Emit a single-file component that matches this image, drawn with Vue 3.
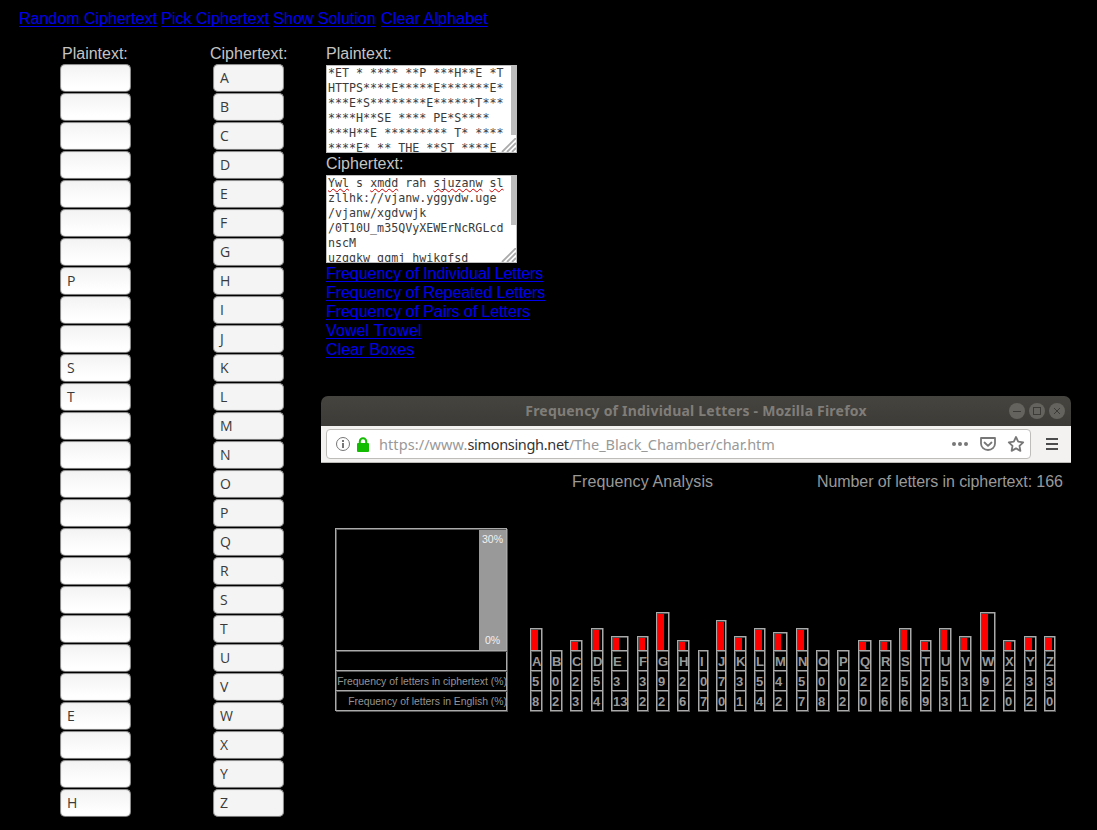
<script setup>
const plainLetters = { 7: 'P', 10: 'S', 11: 'T', 22: 'E', 25: 'H' }
const letters = 'ABCDEFGHIJKLMNOPQRSTUVWXYZ'.split('')
const x = [530, 550, 570, 591, 611, 637, 656, 677, 698, 716, 734, 754, 773, 796, 816, 837, 858, 879, 899, 920, 939, 959, 980, 1003, 1024, 1044]
const w = [13, 13, 13, 13, 18, 12, 14, 13, 11, 11, 13, 12, 15, 13, 14, 13, 14, 13, 13, 12, 13, 13, 16, 13, 13, 12]
const cipher = [5, 0, 2, 5, 3, 3, 9, 2, 0, 7, 3, 5, 4, 5, 0, 0, 2, 2, 5, 2, 5, 3, 9, 2, 3, 3]
const english = [8, 2, 3, 4, 13, 2, 2, 6, 7, 0, 1, 4, 2, 7, 8, 2, 0, 6, 6, 9, 3, 1, 2, 0, 2, 0]
const heights = { 0: 0, 2: 10, 3: 14, 4: 18, 5: 22, 7: 30, 9: 38 }
const columns = letters.map((l, i) => ({
  l, c: cipher[i], e: english[i], h: heights[cipher[i]],
  width: w[i], gap: i ? x[i] - x[i - 1] - w[i - 1] : 23
}))
const plainText = ['*ET * **** **P ***H**E *T', 'HTTPS****E*****E*******E*', '***E*S********E******T***', '****H**SE **** PE*S****', '***H**E ********* T* ****', '****E* ** THE **ST ****E'].join('\n')
const cipherRest = ['zllhk://vjanw.yggydw.uge', '/vjanw/xgdvwjk', '/0T10U_m35QVyXEWErNcRGLcd', 'nscM', 'uzggkw ggmj hwikgfsd'].join('\n')
const words = [['Ywl', 1], ['s', 0], ['xmdd', 1], ['rah', 0], ['sjuzanw', 1], ['sl', 1]]
</script>

<template>
  <div class="page">
    <nav class="top"><a>Random Ciphertext</a> <a>Pick Ciphertext</a> <a>Show Solution</a> <a class="wide">Clear Alphabet</a></nav>
    <div class="main">
      <section class="alpha first">
        <div class="label">Plaintext:</div>
        <div v-for="(l, i) in letters" :key="l" class="field">{{ plainLetters[i] }}</div>
      </section>
      <section class="alpha second">
        <div class="label">Ciphertext:</div>
        <div v-for="l in letters" :key="l" class="field disabled">{{ l }}</div>
      </section>
      <section class="right">
        <div class="boxes">
          <div class="label">Plaintext:</div>
          <div class="area"><pre>{{ plainText }}</pre><i class="scroll long"></i>
            <svg class="grip" width="15" height="14" viewBox="0 0 15 14"><path d="M1 14 15 0M6 14 15 5M11 14 15 10" /></svg>
          </div>
          <div class="label">Ciphertext:</div>
          <div class="area"><pre><template v-for="(q, i) in words" :key="i"><span :class="{ bad: q[1] }">{{ q[0] }}</span>{{ i < 5 ? ' ' : '\n' }}</template>{{ cipherRest }}</pre><i class="scroll short"></i>
            <svg class="grip" width="15" height="14" viewBox="0 0 15 14"><path d="M1 14 15 0M6 14 15 5M11 14 15 10" /></svg>
          </div>
          <div class="links">
            <div><a>Frequency of Individual Letters</a></div>
            <div><a>Frequency of Repeated Letters</a></div>
            <div><a>Frequency of Pairs of Letters</a></div>
            <div><a class="wide">Vowel Trowel</a></div>
            <div><a class="wide">Clear Boxes</a></div>
          </div>
        </div>
        <div class="window">
          <header class="title">
            <span class="name">Frequency of Individual Letters - Mozilla Firefox</span>
            <svg class="controls" width="58" height="18" viewBox="0 0 58 18">
              <g fill="#65635d"><circle cx="9" cy="9" r="8" /><circle cx="29" cy="9" r="8" /><circle cx="49" cy="9" r="8" /></g>
              <g fill="none" stroke="#3c3b37"><path d="M5 9.5h8M46 6l6 6M52 6l-6 6" /><rect x="25.5" y="5.5" width="7" height="7" /></g>
            </svg>
          </header>
          <div class="toolbar">
            <div class="urlbar">
              <svg width="16" height="16" viewBox="0 0 16 16"><circle cx="8" cy="8" r="6.5" fill="none" stroke="#777" /><path d="M7 4h2v2H7zM7 7h2v5H7z" fill="#777" /></svg>
              <svg class="lock" width="12" height="15" viewBox="0 0 12 15"><path d="M2.8 7V4.5a3.2 3.2 0 0 1 6.4 0V7" fill="none" stroke="#12bc00" stroke-width="2" /><rect y="6" width="12" height="9" rx="1" fill="#12bc00" /></svg>
              <span class="url"><span class="scheme">https://www.</span><b>simonsingh.net</b>/The_Black_Chamber/char.htm</span>
              <svg class="acts" width="74" height="18" viewBox="0 0 74 18">
                <g fill="#777"><circle cx="3" cy="9" r="2" /><circle cx="9" cy="9" r="2" /><circle cx="15" cy="9" r="2" /></g>
                <g fill="none" stroke="#777" stroke-width="1.8" stroke-linejoin="round"><path d="M30 3h14v5.500a7 6.500 0 0 1-14 0zM33.500 7.500l3.500 3.300L40.500 7.500" stroke-linecap="round" /><path d="m65 2 2.200 4.700 5 .6-3.700 3.500.9 5.100L65 13.400l-4.400 2.500.9-5.100-3.700-3.500 5-.6z" /></g>
              </svg>
            </div>
            <svg class="menu" width="12" height="14" viewBox="0 0 12 14"><path d="M0 2h12M0 7h12M0 12h12" stroke="#4c4c4c" stroke-width="2" /></svg>
          </div>
          <div class="heading"><span class="fa">Frequency Analysis</span><span class="count">Number of letters in ciphertext: 166</span></div>
          <div class="chart">
            <div class="legend">
              <div class="plot"><div class="scale"><span>30%</span><span>0%</span></div></div>
              <div class="cell"></div>
              <div class="cell">Frequency of letters in ciphertext (%)</div>
              <div class="cell">Frequency of letters in English (%)</div>
            </div>
            <div v-for="c in columns" :key="c.l" class="col" :style="{ width: c.width + 'px', marginLeft: c.gap + 'px' }">
              <div v-if="c.h" class="barcell" :style="{ height: c.h + 'px' }"><i></i></div>
              <div class="cell">{{ c.l }}</div>
              <div class="cell">{{ c.c }}</div>
              <div class="cell">{{ c.e }}</div>
            </div>
          </div>
        </div>
      </section>
    </div>
  </div>
</template>

<style>
body { margin: 0; background: #000; }
</style>
<style scoped>
* { box-sizing: border-box; }
.page { width: 1097px; height: 830px; overflow: hidden; background: #000; color: #c4c4c4; font: 16px/19px "Liberation Sans", Arial, sans-serif; }
.top { padding: 9px 0 0 19px; height: 44px; }
a { color: #0000ee; text-decoration: underline; text-decoration-thickness: 1px; text-underline-offset: 2px; text-decoration-skip-ink: none; }
a.wide { letter-spacing: 0.12px; }
.top a.wide { margin-left: 1px; }
.links a:not(.wide) { letter-spacing: -0.05px; }
.main { display: flex; }
.alpha { width: 72px; flex: none; }
.first { margin-left: 60px; }
.second { margin-left: 81px; }
.label { height: 20px; white-space: nowrap; }
.first .label { padding-left: 2px; }
.second .label { margin-left: -3px; }
.field { width: 71px; height: 28px; margin-bottom: 1px; border: 1px solid #8d8d8d; border-bottom-color: #777; border-radius: 5px; background: linear-gradient(#f3f3f3, #fff 85%); font: 14px/26px "Open Sans", sans-serif; color: #3a3a3a; padding-left: 6px; box-shadow: inset 0 0 1px #aaa; }
.disabled { background: #f4f4f4; }
.right { width: 760px; margin-left: 36px; flex: none; }
.boxes { padding-left: 5px; height: 352px; }
.boxes .label { height: 21px; }
.area { position: relative; width: 191px; height: 88px; background: #fff; border: 1px solid #bebebe; overflow: hidden; margin-bottom: 1px; }
.area pre { margin: 0; padding: 0 0 0 1px; font: 11.66px/15px "DejaVu Sans Mono", monospace; color: #3b3b3b; }
.bad { text-decoration: underline wavy #d40000 1px; text-underline-offset: 1px; text-decoration-skip-ink: none; }
.scroll { position: absolute; right: 0; top: 0; width: 5px; background: #bdbdbd; }
.long { height: 69px; }
.short { height: 49px; }
.grip { position: absolute; right: 0; bottom: 0; }
.grip path { stroke: #aaa; stroke-width: 1.8; fill: none; }
.window { width: 750px; }
.title { height: 30px; border-radius: 7px 7px 0 0; background: linear-gradient(#45443f, #3c3b37); position: relative; text-align: center; font: bold 14px/30px "Noto Sans", sans-serif; letter-spacing: 0.21px; color: #807d78; }
.controls { position: absolute; right: 5px; top: 6px; }
.toolbar { height: 37px; background: #f3f2f1; border-bottom: 1px solid #bcbab7; display: flex; padding: 3px 0 0 5px; }
.urlbar { width: 705px; height: 30px; border: 1px solid #bfbdba; border-radius: 4px; background: #fff; display: flex; align-items: center; padding: 0 5px 0 8px; }
.lock { margin-left: 6px; }
.url { margin-left: 10px; font: 14.5px/28px "Noto Sans", sans-serif; letter-spacing: -0.04px; color: #999; white-space: nowrap; }
.scheme { letter-spacing: 0.08px; }
.url b { font-weight: 400; color: #333; letter-spacing: -0.32px; }
.acts { margin-left: auto; }
.menu { margin: 8px 0 0 15px; }
.heading { display: flex; padding-top: 9px; height: 65px; color: #999; }
.fa { width: 245px; margin-left: 251px; letter-spacing: 0.14px; }
.count { white-space: nowrap; letter-spacing: -0.09px; }
.chart { display: flex; align-items: flex-end; height: 184px; margin-left: 14px; width: 740px; }
.legend { width: 172px; flex: none; margin-bottom: 1px; border: solid #aaa; border-width: 0 1px 1px 0; box-shadow: 1px 1px #555; }
.plot { height: 122px; border: solid #aaa; border-width: 1px 0 0 1px; box-shadow: inset 1px 1px #555; padding-top: 1px; display: flex; justify-content: flex-end; }
.scale { width: 27px; background: #999; color: #f2f2f2; font-size: 10.5px; display: flex; flex-direction: column; justify-content: space-between; align-items: center; }
.cell { height: 20px; border: solid #aaa; border-width: 1px 0 0 1px; box-shadow: inset 1px 1px #555; overflow: hidden; }
.legend .cell { margin-right: -1px; font-size: 10.4px; color: #949494; text-align: right; white-space: nowrap; line-height: 21px; }
.col { flex: none; border: solid #555; border-width: 0 1px 1px 0; }
.col .cell { font: bold 13px/22px "Liberation Sans", sans-serif; color: #999; padding-left: 1px; border-right-width: 1px; }
.col .cell:last-child { border-bottom-width: 1px; height: 21px; }
.barcell { border: solid #aaa; border-width: 1px 1px 0 1px; box-shadow: inset 1px 1px #555; padding: 1px 0 0 1px; }
.barcell i { display: block; width: 6px; height: 100%; background: red; }
</style>
